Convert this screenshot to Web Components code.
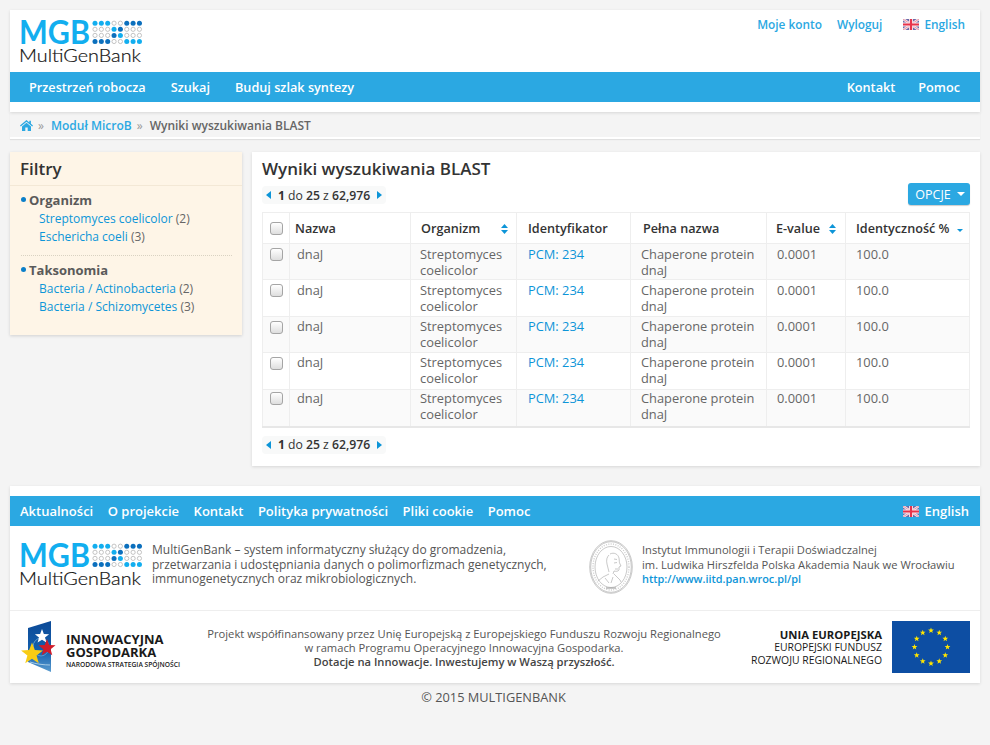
<!DOCTYPE html>
<html lang="pl">
<head>
<meta charset="utf-8">
<title>MultiGenBank</title>
<style>
body{margin:0;padding:10px;background:#f4f4f4;font-family:"Open Sans","Liberation Sans",sans-serif;font-size:13px;color:#555}
</style>
</head>
<body>
<top-header></top-header>
<bread-crumbs></bread-crumbs>
<page-columns>
  <filter-panel></filter-panel>
  <results-panel></results-panel>
</page-columns>
<site-footer></site-footer>
<copy-line></copy-line>
<script>
// LOGO
class MgbLogo extends HTMLElement{
  constructor(){
    super();
    let dots='';
    const rows=['LLLOODDD','OOOLDOOO','OOODLOOO','DDDOOLLL'];
    rows.forEach((r,y)=>{
      [...r].forEach((c,x)=>{
        const cx=75+x*6.35, cy=3.2+y*6.1;
        if(c=='O') dots+=`<circle cx="${cx}" cy="${cy}" r="2.1" fill="none" stroke="#b5b5b5" stroke-width=".8"/>`;
        else dots+=`<circle cx="${cx}" cy="${cy}" r="2.5" fill="${c=='L'?'#12aeef':'#0b6fbd'}"/>`;
      });
    });
    this.attachShadow({mode:'open'}).innerHTML=`
    <style>:host{display:block;width:122px;height:44px}svg{display:block;overflow:visible}</style>
    <svg width="122" height="44" viewBox="0 0 122 44">
      <text x="-1" y="23.5" font-family="Lato,sans-serif" font-weight="700" font-size="32.5" fill="#12aeef" textLength="71" lengthAdjust="spacingAndGlyphs">MGB</text>
      ${dots}
      <text x="-1" y="42" font-family="Lato,sans-serif" font-weight="300" font-size="18.5" fill="#111" stroke="#111" stroke-width=".2" textLength="122" lengthAdjust="spacingAndGlyphs">MultiGenBank</text>
    </svg>`;
  }
}
customElements.define('mgb-logo',MgbLogo);

// FLAG
class UkFlag extends HTMLElement{
  constructor(){
    super();
    this.attachShadow({mode:'open'}).innerHTML=`
    <style>:host{display:inline-block;width:16px;height:11px;line-height:0}</style>
    <svg width="16" height="11" viewBox="0 0 16 11">
      <rect width="16" height="11" fill="#6a6aa8"/>
      <path d="M0 0L16 11M16 0L0 11" stroke="#f3e3ea" stroke-width="2.6"/>
      <path d="M0 0L16 11M16 0L0 11" stroke="#ea7f92" stroke-width=".8"/>
      <path d="M8 0V11M0 5.5H16" stroke="#f8e8ee" stroke-width="4"/>
      <path d="M8 0V11M0 5.5H16" stroke="#e8334a" stroke-width="2.2"/>
    </svg>`;
  }
}
customElements.define('uk-flag',UkFlag);

// BLUE BAR
class BlueBar extends HTMLElement{
  constructor(){
    super();
    this.attachShadow({mode:'open'}).innerHTML=`
    <style>
    :host{display:flex;align-items:center;justify-content:space-between;height:30px;background:#2ba8e2;color:#fff;font-weight:600;font-size:var(--bar-font,12.7px);padding:0 var(--bar-pad,19px)}
    div{display:flex;align-items:center;gap:var(--bar-gap,24px)}
    </style>
    <div><slot name="left"></slot></div>
    <div><slot name="right"></slot></div>`;
  }
}
customElements.define('blue-bar',BlueBar);

// HEADER
class TopHeader extends HTMLElement{
  constructor(){
    super();
    this.attachShadow({mode:'open'}).innerHTML=`
    <style>
    :host{display:block;background:#fff;box-shadow:0 1px 3px rgba(0,0,0,.12);padding-bottom:10px}
    .top{display:flex;justify-content:space-between;height:62px;box-sizing:border-box;padding:0 15px 0 10px}
    mgb-logo{margin-top:10px}
    .links{display:flex;align-items:center;height:28px;color:#2ba8e2;font-weight:600;font-size:11.85px}
    .links span{margin-left:15px}
    .links .en{display:flex;align-items:center;gap:5px;margin-left:21px}
    blue-bar{--bar-pad:19px;--bar-gap:25px}
    blue-bar div[slot=right]{display:flex;gap:23px;padding-right:1px}
    </style>
    <div class="top">
      <mgb-logo></mgb-logo>
      <div class="links"><span>Moje konto</span><span>Wyloguj</span><span class="en"><uk-flag></uk-flag>English</span></div>
    </div>
    <blue-bar>
      <span slot="left">Przestrzeń robocza</span><span slot="left">Szukaj</span><span slot="left">Buduj szlak syntezy</span>
      <div slot="right"><span>Kontakt</span><span>Pomoc</span></div>
    </blue-bar>`;
  }
}
customElements.define('top-header',TopHeader);

// BREADCRUMB
class BreadCrumbs extends HTMLElement{
  constructor(){
    super();
    this.attachShadow({mode:'open'}).innerHTML=`
    <style>
    :host{display:flex;align-items:center;height:23px;padding:2px 10px 0;font-size:12px;font-weight:600;border-bottom:2px solid #fff;box-shadow:0 1px 1px rgba(0,0,0,.08);margin-bottom:13px;color:#666}
    a{color:#2ba8e2}
    i{font-style:normal;color:#999;margin:0 7px 0 5px;font-weight:400}
    svg{display:block}
    </style>
    <svg width="13" height="11" viewBox="0 0 13 11"><path d="M6.5 0L0 5.6l.8.9L6.5 1.7l5.7 4.8.8-.9L10.9 3.8V.8H9.3V2.4ZM6.5 2.8L2 6.5V11H5.3V7.5H7.7V11H11V6.5Z" fill="#2ba8e2"/></svg>
    <i>»</i><a>Moduł MicroB</a><i>»</i><span>Wyniki wyszukiwania BLAST</span>`;
  }
}
customElements.define('bread-crumbs',BreadCrumbs);

// COLUMNS
class PageColumns extends HTMLElement{
  constructor(){
    super();
    this.attachShadow({mode:'open'}).innerHTML=`
    <style>:host{display:flex;align-items:flex-start;gap:10px;margin-bottom:20px}</style>
    <slot></slot>`;
  }
}
customElements.define('page-columns',PageColumns);

// FILTERS
class FilterPanel extends HTMLElement{
  constructor(){
    super();
    const groups=[
      ['Organizm',[['Streptomyces coelicolor',2],['Eschericha coeli',3]]],
      ['Taksonomia',[['Bacteria / Actinobacteria',2],['Bacteria / Schizomycetes',3]]]
    ];
    let html='';
    groups.forEach(g=>{
      html+=`<section><h3>${g[0]}</h3>`;
      g[1].forEach(l=>{ html+=`<p><a>${l[0]}</a> (${l[1]})</p>`; });
      html+=`</section>`;
    });
    this.attachShadow({mode:'open'}).innerHTML=`
    <style>
    :host{display:block;flex:none;width:232px;height:183px;background:#fef5e7;box-shadow:0 1px 3px rgba(0,0,0,.15);font-size:12px;color:#666}
    h2{margin:0;height:33px;line-height:34px;border-bottom:1px solid #f3e8d6;padding-left:10px;font-size:17px;font-weight:600;color:#333}
    section{margin:0 10px 0 11px;padding:5px 0 11px 0;height:53px}
    section:first-of-type{border-bottom:1px dotted #d9d2c2}
    section:last-of-type{padding-top:5px}
    h3{margin:0 0 1px;font-size:13px;line-height:18px;font-weight:700;color:#5a5a5a;padding-left:8px;position:relative}
    h3::before{content:"";position:absolute;left:0;top:6px;width:5px;height:5px;border-radius:50%;background:#0b7fc9}
    p{margin:0;line-height:18px;padding-left:18px}
    a{color:#0d95d8}
    </style>
    <h2>Filtry</h2>
    ${html}`;
  }
}
customElements.define('filter-panel',FilterPanel);

// PAGER
class PagerBox extends HTMLElement{
  constructor(){
    super();
    this.attachShadow({mode:'open'}).innerHTML=`
    <style>
    :host{display:inline-flex;align-items:center;height:18px;padding:0 4px;background:#f8f9f9;border-radius:4px;font-size:12.2px;color:#333;width:116px;justify-content:space-between}
    i{display:block;width:0;height:0;border-style:solid;border-width:4.5px 0}
    .l{border-left:0;border-right:5px solid #0d95d8;border-top-color:transparent;border-bottom-color:transparent}
    .r{border-right:0;border-left:5px solid #0d95d8;border-top-color:transparent;border-bottom-color:transparent}
    b{font-weight:600}
    b.one{font-weight:700}
    </style>
    <i class="l"></i><span><b class="one">1</b> do <b>25</b> z <b>62,976</b></span><i class="r"></i>`;
  }
}
customElements.define('pager-box',PagerBox);

// RESULTS
class ResultsPanel extends HTMLElement{
  constructor(){
    super();
    let rows='';
    const rowH=[36,37,36,37,37];
    const textPad=[2,2,1,1,0];
    const boxPad=[3,3,3,3,1];
    for(let i=0;i<5;i++){
      rows+=`<tr style="height:${rowH[i]}px;--pad:${textPad[i]}px;--cpad:${boxPad[i]}px">
        <td class="c"><input type="checkbox"></td>
        <td><span class="nm">dnaJ</span></td>
        <td class="org">Streptomyces coelicolor</td>
        <td class="id"><a>PCM: 234</a></td>
        <td>Chaperone protein dnaJ</td>
        <td>0.0001</td>
        <td>100.0</td>
      </tr>`;
    }
    const both=`<svg class="s" width="7" height="10" viewBox="0 0 7 10"><path d="M3.5 0L7 4H0ZM3.5 10L0 6H7Z" fill="#0d95d8"/></svg>`;
    this.attachShadow({mode:'open'}).innerHTML=`
    <style>
    :host{display:block;flex:none;width:708px;height:294px;padding:10px;background:#fff;box-shadow:0 1px 3px rgba(0,0,0,.12)}
    h1{margin:0;font-size:17px;line-height:14px;height:24px;font-weight:600;color:#333}
    .bar{display:flex;justify-content:space-between;align-items:flex-start;height:26px}
    button{font:inherit;font-size:12.5px;font-weight:400;width:62px;height:22px;margin-top:-3px;border:0;border-radius:3px;background:#2ba8e2;color:#fff;box-shadow:0 1px 1px rgba(0,0,0,.2);padding:0 0 0 2px;display:flex;align-items:center;justify-content:center;gap:6px}
    button i{display:block;border-style:solid;border-width:4px 4px 0;border-color:#fff transparent transparent}
    table{width:708px;table-layout:fixed;border-collapse:collapse;border:2px solid #e7e7e7;border-width:1px 1px 2px 1px;font-size:12.85px;color:#666}
    th,td{border:1px solid #eee;text-align:left;vertical-align:top;box-sizing:border-box}
    th{height:31px;padding:0 10px;vertical-align:middle;font-weight:600;font-size:12.65px;color:#333;position:relative}
    td{padding:var(--pad) 10px 0 10px;line-height:16px}
    td.org{padding-left:9px}
    td.id{padding-left:11px}
    tr:nth-child(odd) td{background:#fafafa}
    td.c{padding:var(--cpad) 0 0 0;text-align:center}
    .nm{position:relative;left:-3px}
    a{color:#0d95d8}
    input{appearance:none;-webkit-appearance:none;display:block;margin:1px auto 0 7px;width:13px;height:13px;box-sizing:border-box;border:1px solid #a5a5a5;border-radius:3px;background:linear-gradient(#fff,#dedede)}
    th .s{position:absolute;right:9px;top:11px}
    th.o .s{right:8px}
    th input{margin-top:0}
    .down{position:absolute;right:6px;top:16px;border-style:solid;border-width:3.5px 3.5px 0;border-color:#0d95d8 transparent transparent}
    .foot{margin-top:7px}
    </style>
    <h1>Wyniki wyszukiwania BLAST</h1>
    <div class="bar"><pager-box></pager-box><button>OPCJE <i></i></button></div>
    <table>
      <colgroup><col style="width:27px"><col style="width:121px"><col style="width:106px"><col style="width:114px"><col style="width:136px"><col style="width:79px"><col></colgroup>
      <thead><tr>
        <th class="c" style="padding:0"><input type="checkbox"></th>
        <th style="padding-left:5px">Nazwa</th>
        <th class="o">Organizm${both}</th>
        <th style="padding-left:11px">Identyfikator</th>
        <th style="padding-left:12px">Pełna nazwa</th>
        <th style="padding-left:9px">E-value${both}</th>
        <th>Identyczność %<i class="down"></i></th>
      </tr></thead>
      <tbody>${rows}</tbody>
    </table>
    <div class="foot"><pager-box></pager-box></div>`;
  }
}
customElements.define('results-panel',ResultsPanel);

// FOOTER
class SiteFooter extends HTMLElement{
  constructor(){
    super();
    const pts=[];
    for(let i=0;i<12;i++){
      const a=i*Math.PI/6;
      pts.push([39+16.5*Math.sin(a),26-16.5*Math.cos(a)]);
    }
    const star=(x,y,r)=>{
      let d='';
      for(let k=0;k<10;k++){
        const rr=k%2?r*.42:r, t=k*Math.PI/5;
        d+=(k?'L':'M')+(x+rr*Math.sin(t)).toFixed(2)+' '+(y-rr*Math.cos(t)).toFixed(2);
      }
      return d+'Z';
    };
    this.attachShadow({mode:'open'}).innerHTML=`
    <style>
    :host{display:block;background:#fff;box-shadow:0 1px 3px rgba(0,0,0,.12);padding-top:10px}
    blue-bar{--bar-pad:10px;--bar-gap:14.5px;--bar-font:13px}
    blue-bar .en{display:flex;align-items:center;gap:5px;padding-right:1px}
    .info{display:flex;height:85px;box-sizing:border-box;padding:17px 10px 0;border-bottom:1px solid #eee}
    .about{margin-left:10px;width:410px;font-size:12px;line-height:14.5px;color:#555}
    .seal{margin-left:27px;flex:none;margin-top:-3px}
    .inst{margin-left:9px;font-size:11.15px;line-height:14.5px;color:#555}
    .inst a{color:#0d95d8;font-weight:600;font-size:10.9px;display:block}
    .proj{display:flex;align-items:flex-start;height:72px;padding-top:10px;box-sizing:border-box}
    .ig{display:flex;flex:none;width:170px;margin-left:13px;height:52px}
    .igt{margin-left:13px;color:#1a1a1a;padding-top:12px}
    .igt b{display:block;font-size:13px;line-height:13px;font-weight:700}
    .igt span{display:block;font-size:6.7px;line-height:11px;font-weight:600;white-space:nowrap}
    .mid{flex:1;text-align:center;font-size:11.2px;line-height:14px;color:#555;padding-top:6px;margin-right:16px;white-space:nowrap}
    .mid b{font-weight:600;color:#444}
    .ue{text-align:right;color:#1a1a1a;font-size:10.4px;line-height:13px;padding-top:7px;margin-right:10px;flex:none}
    .ue b{font-weight:700;font-size:11.3px;display:block}
    .flag{flex:none;margin-right:10px}
    svg{display:block}
    </style>
    <blue-bar>
      <span slot="left">Aktualności</span><span slot="left">O projekcie</span><span slot="left">Kontakt</span><span slot="left">Polityka prywatności</span><span slot="left">Pliki cookie</span><span slot="left">Pomoc</span>
      <span slot="right" class="en"><uk-flag></uk-flag>English</span>
    </blue-bar>
    <div class="info">
      <mgb-logo></mgb-logo>
      <div class="about">MultiGenBank – system informatyczny służący do gromadzenia, przetwarzania i udostępniania danych o polimorfizmach genetycznych, immunogenetycznych oraz mikrobiologicznych.</div>
      <svg class="seal" width="44" height="54" viewBox="0 0 44 54" fill="none" stroke="#a5a5a5" stroke-width=".6">
        <ellipse cx="22" cy="27" rx="21.3" ry="26.3"/>
        <ellipse cx="22" cy="27" rx="20.3" ry="25.3"/>
        <ellipse cx="22" cy="27" rx="16" ry="20.5"/>
        <ellipse cx="22" cy="27" rx="18" ry="23" stroke-dasharray="1 1.4" stroke="#ccc" stroke-width="1.4"/>
        <path d="M21 14c4-2 8 0 9 4 .5 3 0 4 1 6l1 2-2 1 0 3c-1 1.5-3 1.5-5 1l-1 3M20 15c-2 2-3 5-2 9l1 4 1 4"/>
        <path d="M20 34l-6 3-5 4M25 34l3 3 3 3 1 2M16 38l4 5M24 37l-2 6"/>
        <path d="M25 19l3 .5M25 23l3-.5M26 29h3"/>
        <path d="M17 48h10" stroke-width="1.2"/>
      </svg>
      <div class="inst">Instytut Immunologii i Terapii Doświadczalnej<br>im. Ludwika Hirszfelda Polska Akademia Nauk we Wrocławiu<a>http://www.iitd.pan.wroc.pl/pl</a></div>
    </div>
    <div class="proj">
      <div class="ig">
        <svg width="30" height="52" viewBox="0 0 30 52" style="flex:none;overflow:visible">
          <defs><linearGradient id="ig" x1="0" y1="0" x2="0" y2="1"><stop offset="0" stop-color="#0c4a97"/><stop offset=".6" stop-color="#1460ae"/><stop offset="1" stop-color="#5b9ccf"/></linearGradient></defs>
          <path d="M5 7L28 0V51L5 41Z" fill="url(#ig)"/>
          <path d="M7 41c6 2 14 3 20 3" stroke="#a9cde6" stroke-width="1" fill="none"/>
          <ellipse cx="18" cy="26" rx="8" ry="9" fill="none" stroke="#5b9ccf" stroke-width="1"/>
          <path d="${star(19,15.5,7.5)}" fill="#fff"/>
          <path d="${star(24,27,9)}" fill="#d01c2a"/>
          <path d="${star(9,33,11.5)}" fill="#f8cc14"/>
        </svg>
        <div class="igt"><b>INNOWACYJNA</b><b>GOSPODARKA</b><span>NARODOWA STRATEGIA SPÓJNOŚCI</span></div>
      </div>
      <div class="mid">Projekt współfinansowany przez Unię Europejską z Europejskiego Funduszu Rozwoju Regionalnego<br>w ramach Programu Operacyjnego Innowacyjna Gospodarka.<br><b>Dotacje na Innowacje. Inwestujemy w Waszą przyszłość.</b></div>
      <div class="ue"><b>UNIA EUROPEJSKA</b>EUROPEJSKI FUNDUSZ<br>ROZWOJU REGIONALNEGO</div>
      <svg class="flag" width="78" height="52" viewBox="0 0 78 52">
        <rect width="78" height="52" fill="#0d4ea3"/>
        <path d="${pts.map(p=>star(p[0],p[1],3)).join('')}" fill="#ffe500"/>
      </svg>
    </div>`;
  }
}
customElements.define('site-footer',SiteFooter);

class CopyLine extends HTMLElement{
  constructor(){
    super();
    this.attachShadow({mode:'open'}).innerHTML=`
    <style>:host{display:block;text-align:center;font-size:12.8px;line-height:18px;padding:5px 3px 0 0;color:#555}</style>
    © 2015 MULTIGENBANK`;
  }
}
customElements.define('copy-line',CopyLine);
</script>
</body>
</html>
